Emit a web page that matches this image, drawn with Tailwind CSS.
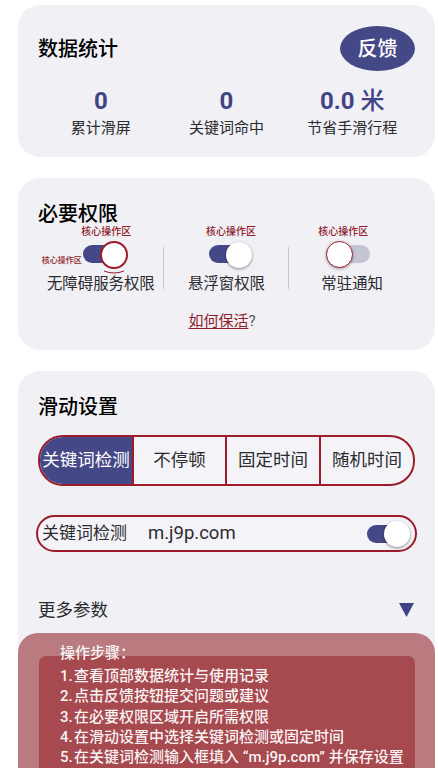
<!DOCTYPE html>
<html lang="zh-CN">
<head>
    <meta charset="UTF-8">
    <meta name="viewport" content="width=device-width, initial-scale=1.0">
    <title>滑动设置</title>
    <script src="https://cdn.jsdelivr.net/npm/@tailwindcss/browser@4"></script>
</head>
<body class="bg-white font-['Roboto','Noto_Sans_CJK_SC',sans-serif] text-[#2b2b2e] overflow-hidden">
    <div class="relative h-[768px] w-[438px] overflow-hidden pl-[18px] pr-[3px] pt-[5px]">

        <!-- 数据统计 -->
        <section class="h-[152px] rounded-[22px] bg-[#f0f0f5] pl-[20px] pr-[20px] pt-[21px]">
            <div class="flex h-[45px] items-center justify-between">
                <h2 class="text-[20px] font-medium text-black">数据统计</h2>
                <button class="h-[45px] w-[75px] rounded-[50%] bg-[#454887] text-[20px] font-medium text-white">反馈</button>
            </div>
            <div class="mt-[16px] grid grid-cols-3 text-center">
                <div>
                    <div class="h-[28px] text-[24px] leading-[28px] font-bold text-[#3f4485]">0</div>
                    <div class="mt-[2px] text-[15px] leading-[22px]">累计滑屏</div>
                </div>
                <div>
                    <div class="h-[28px] text-[24px] leading-[28px] font-bold text-[#3f4485]">0</div>
                    <div class="mt-[2px] text-[15px] leading-[22px]">关键词命中</div>
                </div>
                <div>
                    <div class="h-[28px] text-[24px] leading-[28px] font-bold text-[#3f4485]">0.0 <span class="font-medium">米</span></div>
                    <div class="mt-[2px] text-[15px] leading-[22px]">节省手滑行程</div>
                </div>
            </div>
        </section>

        <!-- 必要权限 -->
        <section class="mt-[21px] h-[172px] rounded-[22px] bg-[#f0f0f5] pl-[20px] pr-[20px] pt-[22px]">
            <h2 class="text-[20px] leading-[28px] font-medium text-black">必要权限</h2>
            <div class="mt-[3px] grid grid-cols-3 text-center">
                <div class="relative flex flex-col items-center">
                    <div class="ml-[11px] mt-[-6px] h-[14px] whitespace-nowrap text-[10px] leading-[14px] font-medium text-[#8f1d2a]">核心操作区</div>
                    <div class="relative ml-[6px] mt-[6px] h-[18px] w-[42px] rounded-full bg-[#454887]">
                        <span class="absolute right-[-3px] top-[-4px] h-[28px] w-[28px] rounded-full border-2 border-[#9c1c2a] bg-white"></span>
                        <span class="absolute left-[-41px] top-[10px] whitespace-nowrap text-[8px] leading-[12px] font-medium text-[#8f1d2a]">核心操作区</span>
                        <svg class="absolute left-[20px] top-[25px]" width="22" height="5" viewBox="0 0 22 5" fill="none"><path d="M1 1q10 4 20 0" stroke="#9c1c2a" stroke-width="1"/></svg>
                    </div>
                    <div class="mt-[10px] text-[15.4px] leading-[22px]">无障碍服务权限</div>
                    <span class="absolute right-0 top-[16px] h-[42px] w-px bg-[#c9c9d0]"></span>
                </div>
                <div class="relative flex flex-col items-center">
                    <div class="ml-[9px] mt-[-6px] h-[14px] whitespace-nowrap text-[10px] leading-[14px] font-medium text-[#8f1d2a]">核心操作区</div>
                    <div class="relative ml-[8px] mt-[6px] h-[18px] w-[42px] rounded-full bg-[#454887]">
                        <span class="absolute right-[-1px] top-[-3px] h-[26px] w-[26px] rounded-full bg-white shadow-[0_1px_3px_rgba(0,0,0,0.45)]"></span>
                    </div>
                    <div class="mt-[10px] text-[15.4px] leading-[22px]">悬浮窗权限</div>
                    <span class="absolute right-0 top-[16px] h-[42px] w-px bg-[#c9c9d0]"></span>
                </div>
                <div class="flex flex-col items-center">
                    <div class="mr-[18px] mt-[-6px] h-[14px] whitespace-nowrap text-[10px] leading-[14px] font-medium text-[#8f1d2a]">核心操作区</div>
                    <div class="relative mr-[8px] mt-[6px] h-[18px] w-[44px] rounded-full bg-[#c3c6d2]">
                        <span class="absolute left-0 top-[-4px] h-[27px] w-[27px] rounded-full border border-[#9c1c2a] bg-white shadow-[0_1px_3px_rgba(0,0,0,0.35)]"></span>
                    </div>
                    <div class="mt-[10px] text-[15.4px] leading-[22px]">常驻通知</div>
                </div>
            </div>
            <div class="mt-[15px] pr-[9px] text-center text-[15px] leading-[22px] text-[#8f1d2a]"><span class="underline underline-offset-2">如何保活</span><span class="text-[#555]">?</span></div>
        </section>

        <!-- 滑动设置 -->
        <section class="mt-[21px] h-[420px] rounded-t-[22px] bg-[#f0f0f5] pl-[20px] pr-[20px] pt-[22px]">
            <h2 class="text-[20px] leading-[28px] font-medium text-black">滑动设置</h2>
            <div class="mt-[14px] flex h-[51px] w-[377px] overflow-hidden rounded-[25px] border-2 border-[#9c1c2a] bg-white/30 text-center text-[17.5px]">
                <div class="flex w-[94px] items-center justify-center whitespace-nowrap border-r-2 border-[#9c1c2a] bg-[#454887] text-white">关键词检测</div>
                <div class="flex w-[93px] items-center justify-center border-r-2 border-[#9c1c2a]">不停顿</div>
                <div class="flex w-[94px] items-center justify-center whitespace-nowrap border-r-2 border-[#9c1c2a]">固定时间</div>
                <div class="flex flex-1 items-center justify-center whitespace-nowrap">随机时间</div>
            </div>
            <div class="ml-[-2px] mt-[29px] flex h-[37px] w-[381px] items-center rounded-[19px] border-2 border-[#9c1c2a] bg-white/30 pl-[4px] pr-[6px]">
                <span class="text-[17px]">关键词检测</span>
                <span class="ml-[21px] text-[18.5px]">m.j9p.com</span>
                <div class="relative ml-auto h-[18px] w-[42px] rounded-full bg-[#454887]">
                    <span class="absolute right-[-1px] top-[-4px] h-[26px] w-[26px] rounded-full bg-white shadow-[0_1px_3px_rgba(0,0,0,0.45)]"></span>
                </div>
            </div>
            <div class="mt-[45px] flex items-center justify-between pr-[1px]">
                <span class="text-[17.5px] leading-[26px]">更多参数</span>
                <svg width="15" height="14" viewBox="0 0 15 14"><path d="M0 0h15L7.5 14z" fill="#3f4485"/></svg>
            </div>
        </section>

        <!-- 操作步骤 -->
        <div class="absolute bottom-0 left-[18px] h-[135px] w-[417px] rounded-t-[20px] bg-[#b97b7f] pl-[21px] pr-[20px] pt-[23px]">
            <div class="flow-root h-full rounded-t-[7px] bg-[#a74a50] pl-[21px] text-[15px] leading-[20.3px] font-medium whitespace-nowrap text-white/95">
                <div class="mt-[-14px] h-[24px] pt-[1px] leading-[20px]">操作步骤：</div>
                <div class="flex"><span class="w-[14px]">1.</span>查看顶部数据统计与使用记录</div>
                <div class="flex"><span class="w-[14px]">2.</span>点击反馈按钮提交问题或建议</div>
                <div class="flex"><span class="w-[14px]">3.</span>在必要权限区域开启所需权限</div>
                <div class="flex"><span class="w-[14px]">4.</span>在滑动设置中选择关键词检测或固定时间</div>
                <div class="flex"><span class="w-[14px]">5.</span>在关键词检测输入框填入 “m.j9p.com” 并保存设置</div>
            </div>
        </div>
    </div>
</body>
</html>
